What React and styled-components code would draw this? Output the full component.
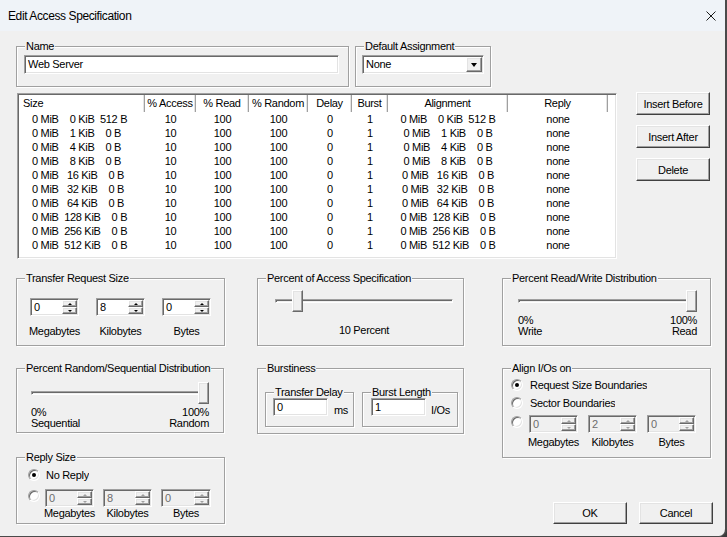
import React from "react";
import styled, { createGlobalStyle, css } from "styled-components";

const GlobalStyle = createGlobalStyle`
  * { box-sizing: border-box; }
  html, body { margin: 0; padding: 0; background: #3a3a3a; }
  body {
    font-family: "Liberation Sans", Arial, sans-serif;
    font-size: 11px;
    letter-spacing: -0.3px;
    color: #000;
  }
`;

const sunken = css`
  border: 1px solid;
  border-color: #a0a0a0 #ffffff #ffffff #a0a0a0;
  box-shadow: inset 1px 1px 0 #696969, inset -1px -1px 0 #e3e3e3;
  padding: 1px;
`;

const raised = css`
  border: 1px solid;
  border-color: #ffffff #696969 #696969 #ffffff;
  box-shadow: inset -1px -1px 0 #a0a0a0, inset 1px 1px 0 #e3e3e3;
  background: #f0f0f0;
`;

const COLS = [126, 51, 53, 59, 44, 36, 120, 100];
const HEADERS = ["Size", "% Access", "% Read", "% Random", "Delay", "Burst", "Alignment", "Reply"];
const SIZES = [
  [0, 0, 512], [0, 1, 0], [0, 4, 0], [0, 8, 0], [0, 16, 0],
  [0, 32, 0], [0, 64, 0], [0, 128, 0], [0, 256, 0], [0, 512, 0],
];

const pad3 = (n) => String(n).padStart(3, " ");
const fmtSize = ([m, k, b]) => `${m} MiB  ${pad3(k)} KiB  ${pad3(b)} B`;

const Window = styled.div`
  width: 727px;
  height: 537px;
  display: flex;
  flex-direction: column;
  background: #f0f0f0;
  border-right: 2px solid #4a4a4a;
  border-bottom: 1px solid #4a4a4a;
  border-bottom-right-radius: 8px;
  overflow: hidden;
`;

const TitleBar = styled.div`
  height: 31px;
  flex: none;
  display: flex;
  align-items: center;
  justify-content: space-between;
  padding: 0 9px 0 8px;
  background: #eff3f8;
  font-size: 12px;
  letter-spacing: -0.4px;
`;

const Content = styled.div`
  flex: 1;
  display: flex;
  flex-direction: column;
  padding: 9px 0 0 16px;
`;

const Row = styled.div`
  display: flex;
  align-items: flex-start;
  margin-top: ${(p) => p.$mt || 0}px;
  gap: ${(p) => p.$gap || 0}px;
`;

const Column = styled.div`
  display: flex;
  flex-direction: column;
  width: ${(p) => p.$w}px;
  margin-left: ${(p) => p.$ml || 0}px;
  flex: none;
`;

const Group = styled.fieldset`
  margin: ${(p) => p.$mt || 0}px 0 0 0;
  padding: 0;
  width: ${(p) => p.$w}px;
  height: ${(p) => p.$h}px;
  min-width: 0;
  flex: none;
  border: 1px solid #a0a0a0;
  box-shadow: inset 1px 1px 0 #fff, 1px 1px 0 #fff;
`;

const Legend = styled.legend`
  margin-left: 8px;
  padding: 0 1px;
  line-height: ${(p) => p.$lh || 13}px;
  background: #f0f0f0;
  white-space: nowrap;
`;

const GroupBody = styled.div`
  padding: ${(p) => p.$pad || "0"};
`;

const TextBox = styled.div`
  ${sunken}
  width: ${(p) => p.$w}px;
  height: ${(p) => p.$h || 18}px;
  background: #fff;
  padding-left: 3px;
  line-height: ${(p) => (p.$h || 18) - 4}px;
  flex: none;
`;

const SelectBox = styled.div`
  ${sunken}
  width: 122px;
  height: 19px;
  display: flex;
  background: #fff;
`;

const SelectText = styled.span`
  flex: 1;
  padding-left: 2px;
  line-height: 15px;
`;

const SelectButton = styled.div`
  ${raised}
  width: 16px;
  display: flex;
  align-items: center;
  justify-content: center;
`;

const Arrow = styled.span`
  width: 0;
  height: 0;
  border-left: ${(p) => p.$size || 3}px solid transparent;
  border-right: ${(p) => p.$size || 3}px solid transparent;
  ${(p) =>
    p.$up
      ? `border-bottom: ${p.$tall || 2}px solid ${p.$disabled ? "#a0a0a0" : "#000"};`
      : `border-top: ${p.$tall || 2}px solid ${p.$disabled ? "#a0a0a0" : "#000"};`}
`;

const SpinBox = styled.div`
  ${sunken}
  width: ${(p) => p.$w || 49}px;
  height: 18px;
  display: flex;
  flex: none;
  background: ${(p) => (p.$disabled ? "#f0f0f0" : "#fff")};
`;

const SpinValue = styled.span`
  flex: 1;
  padding-left: 2px;
  line-height: 14px;
  color: ${(p) => (p.$disabled ? "#6d6d6d" : "#000")};
`;

const SpinButtons = styled.div`
  width: 15px;
  display: flex;
  flex-direction: column;
`;

const SpinButton = styled.div`
  ${raised}
  flex: 1;
  display: flex;
  align-items: center;
  justify-content: center;
`;

const FieldColumn = styled.div`
  display: flex;
  flex-direction: column;
  align-items: center;
  width: ${(p) => p.$w || 49}px;
  flex: none;
`;

const FieldLabel = styled.span`
  margin-top: ${(p) => p.$mt || 0}px;
  line-height: 13px;
  white-space: nowrap;
`;

const SliderBox = styled.div`
  position: relative;
  width: ${(p) => p.$w}px;
  height: 22px;
  display: flex;
  align-items: center;
  flex: none;
`;

const Groove = styled.div`
  width: 100%;
  height: 4px;
  border: 1px solid;
  border-color: #a0a0a0 #fff #fff #a0a0a0;
  box-shadow: inset 1px 1px 0 #696969;
`;

const Thumb = styled.div`
  ${raised}
  position: absolute;
  top: 0;
  width: 11px;
  height: 22px;
`;

const CenterLabel = styled.div`
  width: ${(p) => p.$w}px;
  margin-top: ${(p) => p.$mt || 0}px;
  text-align: center;
  line-height: 13px;
`;

const EndLabels = styled.div`
  width: ${(p) => p.$w}px;
  margin-top: 3px;
  display: flex;
  justify-content: space-between;
  line-height: 11px;
`;

const EndLabel = styled.div`
  display: flex;
  flex-direction: column;
  align-items: ${(p) => (p.$right ? "flex-end" : "flex-start")};
`;

const Unit = styled.span`
  margin-left: ${(p) => p.$ml || 5}px;
  padding-top: 6px;
  line-height: 13px;
`;

const RadioRow = styled.div`
  display: flex;
  align-items: ${(p) => (p.$top ? "flex-start" : "center")};
  height: ${(p) => (p.$top ? "auto" : "18px")};
  margin-top: ${(p) => p.$mt || 0}px;
`;

const RadioCircle = styled.span`
  width: 12px;
  height: 12px;
  margin-top: ${(p) => p.$mt || 0}px;
  border-radius: 50%;
  flex: none;
  display: flex;
  align-items: center;
  justify-content: center;
  background: #fff;
  border: 1px solid;
  border-color: #a0a0a0 #fff #fff #a0a0a0;
  box-shadow: inset 1px 1px 0 #696969, inset -1px -1px 0 #e3e3e3;
  &::after {
    content: "";
    display: ${(p) => (p.$checked ? "block" : "none")};
    width: 4px;
    height: 4px;
    border-radius: 50%;
    background: #000;
  }
`;

const RadioLabel = styled.span`
  margin-left: ${(p) => p.$ml || 6}px;
  max-width: ${(p) => p.$max || 200}px;
  overflow: hidden;
  white-space: nowrap;
  line-height: 13px;
`;

const SpinGroup = styled.div`
  display: flex;
  margin-left: ${(p) => p.$ml || 0}px;
  gap: ${(p) => p.$gap || 10}px;
`;

const ListView = styled.div`
  ${sunken}
  width: 600px;
  height: 166px;
  margin-left: 1px;
  background: #fff;
  display: flex;
  flex-direction: column;
  overflow: hidden;
  flex: none;
`;

const HeaderRow = styled.div`
  display: flex;
  height: 17px;
  flex: none;
`;

const HeaderCell = styled.div`
  width: ${(p) => p.$w}px;
  flex: none;
  text-align: ${(p) => (p.$left ? "left" : "center")};
  padding-left: ${(p) => (p.$left ? 4 : 0)}px;
  line-height: 16px;
  border-right: 1px solid #a0a0a0;
  box-shadow: inset -1px 0 0 #e3e3e3;
`;

const DataRow = styled.div`
  display: flex;
  height: 14px;
  line-height: 14px;
  flex: none;
`;

const Cell = styled.div`
  width: ${(p) => p.$w}px;
  flex: none;
  white-space: pre;
  text-align: ${(p) => (p.$left ? "left" : "center")};
  padding-left: ${(p) => (p.$left ? 13 : 0)}px;
`;

const PushButton = styled.div`
  width: 74px;
  height: ${(p) => p.$h || 23}px;
  display: flex;
  align-items: center;
  justify-content: center;
  background: #f0f0f0;
  border: 1px solid;
  border-color: #fff #404040 #404040 #fff;
  box-shadow: inset -1px -1px 0 #a0a0a0, inset 1px 1px 0 #e3e3e3;
  flex: none;
`;

const SideButtons = styled.div`
  display: flex;
  flex-direction: column;
  gap: 10px;
  margin-left: 19px;
  margin-top: -1px;
`;

const BottomButtons = styled.div`
  display: flex;
  justify-content: flex-end;
  gap: 12px;
  width: 211px;
  margin-top: 44px;
`;

function Spin({ value, disabled, w }) {
  return (
    <SpinBox $disabled={disabled} $w={w}>
      <SpinValue $disabled={disabled}>{value}</SpinValue>
      <SpinButtons>
        <SpinButton>
          <Arrow $up $disabled={disabled} $size={2.5} />
        </SpinButton>
        <SpinButton>
          <Arrow $disabled={disabled} $size={2.5} />
        </SpinButton>
      </SpinButtons>
    </SpinBox>
  );
}

function SpinField({ value, label, disabled, labelGap, w }) {
  return (
    <FieldColumn $w={w}>
      <Spin value={value} disabled={disabled} w={w} />
      <FieldLabel $mt={labelGap}>{label}</FieldLabel>
    </FieldColumn>
  );
}

function Slider({ value, width }) {
  const left = Math.round((value / 100) * (width - 11));
  return (
    <SliderBox $w={width}>
      <Groove />
      <Thumb style={{ left }} />
    </SliderBox>
  );
}

function CloseIcon() {
  return (
    <svg width="10" height="10" viewBox="0 0 10 10">
      <path d="M0.5 0.5 L9.5 9.5 M9.5 0.5 L0.5 9.5" stroke="#1a1a1a" strokeWidth="1" />
    </svg>
  );
}

export default function App() {
  return (
    <>
      <GlobalStyle />
      <Window>
        <TitleBar>
          <span>Edit Access Specification</span>
          <CloseIcon />
        </TitleBar>
        <Content>
          <Row $gap={6}>
            <Group $w={333} $h={47}>
              <Legend>Name</Legend>
              <GroupBody $pad="2px 0 0 7px">
                <TextBox $w={315} $h={19}>Web Server</TextBox>
              </GroupBody>
            </Group>
            <Group $w={136} $h={47}>
              <Legend>Default Assignment</Legend>
              <GroupBody $pad="2px 0 0 6px">
                <SelectBox>
                  <SelectText>None</SelectText>
                  <SelectButton>
                    <Arrow $size={3.5} $tall={4} />
                  </SelectButton>
                </SelectBox>
              </GroupBody>
            </Group>
          </Row>

          <Row $mt={6}>
            <ListView>
              <HeaderRow>
                {HEADERS.map((h, i) => (
                  <HeaderCell key={h} $w={COLS[i]} $left={i === 0}>
                    {h}
                  </HeaderCell>
                ))}
              </HeaderRow>
              {SIZES.map((s) => (
                <DataRow key={s.join("-")}>
                  <Cell $w={COLS[0]} $left>{fmtSize(s)}</Cell>
                  <Cell $w={COLS[1]}>10</Cell>
                  <Cell $w={COLS[2]}>100</Cell>
                  <Cell $w={COLS[3]}>100</Cell>
                  <Cell $w={COLS[4]}>0</Cell>
                  <Cell $w={COLS[5]}>1</Cell>
                  <Cell $w={COLS[6]}>{fmtSize(s)}</Cell>
                  <Cell $w={COLS[7]}>none</Cell>
                </DataRow>
              ))}
            </ListView>
            <SideButtons>
              <PushButton>Insert Before</PushButton>
              <PushButton>Insert After</PushButton>
              <PushButton>Delete</PushButton>
            </SideButtons>
          </Row>

          <Row $mt={13}>
            <Column $w={209}>
              <Group $w={209} $h={74}>
                <Legend>Transfer Request Size</Legend>
                <GroupBody $pad="13px 0 0 13px">
                  <SpinGroup $gap={17}>
                    <SpinField value="0" label="Megabytes" labelGap={9} />
                    <SpinField value="8" label="Kilobytes" labelGap={9} />
                    <SpinField value="0" label="Bytes" labelGap={9} />
                  </SpinGroup>
                </GroupBody>
              </Group>
              <Group $w={208} $h={71} $mt={16}>
                <Legend>Percent Random/Sequential Distribution</Legend>
                <GroupBody $pad="7px 0 0 14px">
                  <Slider value={100} width={178} />
                  <EndLabels $w={178}>
                    <EndLabel>
                      <span>0%</span>
                      <span>Sequential</span>
                    </EndLabel>
                    <EndLabel $right>
                      <span>100%</span>
                      <span>Random</span>
                    </EndLabel>
                  </EndLabels>
                </GroupBody>
              </Group>
              <Group $w={209} $h={73} $mt={18}>
                <Legend>Reply Size</Legend>
                <GroupBody $pad="2px 0 0 11px">
                  <RadioRow>
                    <RadioCircle $checked />
                    <RadioLabel $ml={6}>No Reply</RadioLabel>
                  </RadioRow>
                  <RadioRow $top $mt={5}>
                    <RadioCircle $mt={1} />
                    <SpinGroup $ml={5} $gap={9}>
                      <SpinField value="0" label="Megabytes" disabled w={49} />
                      <SpinField value="8" label="Kilobytes" disabled w={49} />
                      <SpinField value="0" label="Bytes" disabled w={50} />
                    </SpinGroup>
                  </RadioRow>
                </GroupBody>
              </Group>
            </Column>

            <Column $w={207} $ml={32}>
              <Group $w={207} $h={74}>
                <Legend>Percent of Access Specification</Legend>
                <GroupBody $pad="5px 0 0 17px">
                  <Slider value={10} width={178} />
                  <CenterLabel $w={178} $mt={12}>10 Percent</CenterLabel>
                </GroupBody>
              </Group>
              <Group $w={207} $h={72} $mt={16}>
                <Legend>Burstiness</Legend>
                <GroupBody $pad="11px 0 0 7px">
                  <Row $gap={8}>
                    <Group $w={89} $h={41}>
                      <Legend $lh={12}>Transfer Delay</Legend>
                      <GroupBody $pad="0 0 0 7px">
                        <Row>
                          <TextBox $w={55}>0</TextBox>
                          <Unit $ml={6}>ms</Unit>
                        </Row>
                      </GroupBody>
                    </Group>
                    <Group $w={96} $h={41}>
                      <Legend $lh={12}>Burst Length</Legend>
                      <GroupBody $pad="0 0 0 8px">
                        <Row>
                          <TextBox $w={55}>1</TextBox>
                          <Unit $ml={5}>I/Os</Unit>
                        </Row>
                      </GroupBody>
                    </Group>
                  </Row>
                </GroupBody>
              </Group>
            </Column>

            <Column $w={209} $ml={38}>
              <Group $w={209} $h={74}>
                <Legend>Percent Read/Write Distribution</Legend>
                <GroupBody $pad="5px 0 0 15px">
                  <Slider value={100} width={179} />
                  <EndLabels $w={179}>
                    <EndLabel>
                      <span>0%</span>
                      <span>Write</span>
                    </EndLabel>
                    <EndLabel $right>
                      <span>100%</span>
                      <span>Read</span>
                    </EndLabel>
                  </EndLabels>
                </GroupBody>
              </Group>
              <Group $w={209} $h={96} $mt={16}>
                <Legend>Align I/Os on</Legend>
                <GroupBody $pad="1px 0 0 8px">
                  <RadioRow>
                    <RadioCircle $checked />
                    <RadioLabel $ml={7} $max={117}>Request Size Boundaries</RadioLabel>
                  </RadioRow>
                  <RadioRow>
                    <RadioCircle />
                    <RadioLabel $ml={7}>Sector Boundaries</RadioLabel>
                  </RadioRow>
                  <RadioRow $top $mt={3}>
                    <RadioCircle $mt={1} />
                    <SpinGroup $ml={6} $gap={10}>
                      <SpinField value="0" label="Megabytes" disabled labelGap={3} />
                      <SpinField value="2" label="Kilobytes" disabled labelGap={3} />
                      <SpinField value="0" label="Bytes" disabled labelGap={3} />
                    </SpinGroup>
                  </RadioRow>
                </GroupBody>
              </Group>
              <BottomButtons>
                <PushButton $h={22}>OK</PushButton>
                <PushButton $h={22}>Cancel</PushButton>
              </BottomButtons>
            </Column>
          </Row>
        </Content>
      </Window>
    </>
  );
}
